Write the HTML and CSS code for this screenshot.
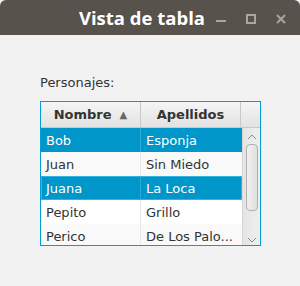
FILE: index.html
```html
<!DOCTYPE html>
<html lang="es">
<head>
    <meta charset="UTF-8">
    <title>Vista de tabla</title>
    <link rel="stylesheet" href="styles.css">
</head>
<body>
    <div class="window">
        <div class="titlebar">
            <span class="title">Vista de tabla</span>
            <div class="controls">
                <svg width="12" height="12" viewBox="0 0 12 12"><rect x="1" y="7" width="10" height="2" fill="#aba59f"/></svg>
                <svg width="12" height="12" viewBox="0 0 12 12"><rect x="2" y="2" width="8" height="8" fill="none" stroke="#aba59f" stroke-width="2"/></svg>
                <svg width="12" height="12" viewBox="0 0 12 12"><path d="M2 2 L10 10 M10 2 L2 10" stroke="#aba59f" stroke-width="2"/></svg>
            </div>
        </div>
        <div class="content">
            <div class="label">Personajes:</div>
            <div class="table">
                <div class="head">
                    <div class="th col1">Nombre <span class="arrow">&#9650;</span></div>
                    <div class="th col2">Apellidos</div>
                    <div class="th corner"></div>
                </div>
                <div class="body">
                    <div class="rows">
                        <div class="row sel"><div class="td col1">Bob</div><div class="td col2">Esponja</div></div>
                        <div class="row odd"><div class="td col1">Juan</div><div class="td col2">Sin Miedo</div></div>
                        <div class="row sel focus"><div class="td col1">Juana</div><div class="td col2">La Loca</div></div>
                        <div class="row"><div class="td col1">Pepito</div><div class="td col2">Grillo</div></div>
                        <div class="row odd"><div class="td col1">Perico</div><div class="td col2">De Los Palo...</div></div>
                    </div>
                    <div class="scrollbar">
                        <svg width="16" height="10" viewBox="0 0 16 10"><path d="M4 7 L8 3 L12 7" fill="none" stroke="#8a8a8a" stroke-width="1"/></svg>
                        <div class="thumb"></div>
                        <div class="track"></div>
                        <svg width="16" height="10" viewBox="0 0 16 10"><path d="M4 3 L8 7 L12 3" fill="none" stroke="#8a8a8a" stroke-width="1"/></svg>
                    </div>
                </div>
            </div>
        </div>
    </div>
</body>
</html>
```
FILE: styles.css
```css
body {
    margin: 0;
    background: #ffffff;
    font-family: "DejaVu Sans", sans-serif;
}
.window {
    width: 300px;
    height: 286px;
    background: #f2f2f2;
    display: flex;
    flex-direction: column;
}
.titlebar {
    height: 35px;
    background: #58524c;
    border-radius: 6px 6px 0 0;
    display: flex;
    align-items: center;
    justify-content: flex-end;
}
.title {
    color: #ffffff;
    font-family: "Open Sans", sans-serif;
    font-weight: bold;
    font-size: 18.5px;
    margin-right: 10px;
}
.controls {
    display: flex;
    gap: 18px;
    margin-right: 13px;
    padding-top: 2px;
}
.content {
    padding: 40px 0 0 40px;
}
.label {
    font-size: 13px;
    color: #333333;
    height: 26px;
}
.table {
    width: 219px;
    border: 1px solid #039ed3;
    background: #ffffff;
    font-size: 13px;
}
.head {
    display: flex;
    height: 25px;
    border-bottom: 1px solid #c8c8c8;
    background: linear-gradient(#f5f5f5, #e2e2e2);
}
.th {
    display: flex;
    align-items: center;
    justify-content: center;
    font-weight: bold;
    color: #333333;
    border-right: 1px solid #c8c8c8;
}
.th.col1 { width: 99px; }
.th.col2 { width: 99px; }
.th.corner { flex: 1; border-right: none; }
.arrow {
    font-size: 10px;
    color: #666666;
    margin-left: 8px;
}
.body {
    display: flex;
    height: 117px;
    overflow: hidden;
}
.rows {
    width: 201px;
}
.row {
    display: flex;
    height: 24px;
    box-sizing: border-box;
    color: #333333;
    background: #ffffff;
}
.row.odd { background: #f9f9f9; }
.row.sel {
    background: #0096c9;
    color: #ffffff;
}
.row.focus { box-shadow: inset 0 0 0 1px #33b4e0; }
.td {
    display: flex;
    align-items: center;
    padding-left: 5px;
    box-sizing: border-box;
    border-right: 1px solid #e8e8e8;
}
.row.sel .td { border-right-color: #2fa8d3; }
.td.col1 { width: 100px; }
.td.col2 { width: 101px; border-right: none; }
.scrollbar {
    flex: 1;
    display: flex;
    flex-direction: column;
    align-items: center;
    background: linear-gradient(90deg, #e4e4e4, #efefef);
    border-left: 1px solid #d6d6d6;
}
.scrollbar svg { margin-top: 4px; }
.thumb {
    width: 12px;
    height: 67px;
    margin-top: 2px;
    border: 1px solid #b0b0b0;
    border-radius: 4px;
    background: linear-gradient(90deg, #f0f0f0, #e0e0e0);
    box-sizing: border-box;
}
.track { flex: 1; }
```
